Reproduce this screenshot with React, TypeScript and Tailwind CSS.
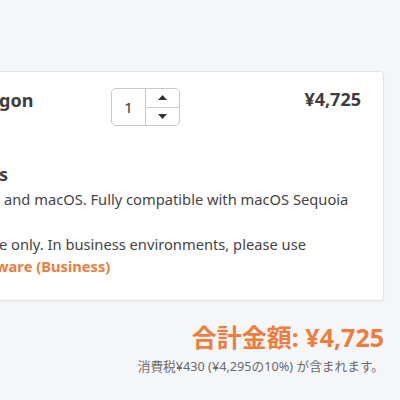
import { ReactNode } from "react";

const lines = {
  title: { hidden: "Microsoft NTFS for Mac by Para", shown: "gon" },
  heading: { hidden: "System Requirement", shown: "s" },
};

// one row of text whose first part sits to the left of the viewport
function Line({
  hidden,
  children,
  offset = 0,
  className = "",
}: {
  hidden: string;
  children?: ReactNode;
  offset?: number;
  className?: string;
}) {
  return (
    <div className={`flex whitespace-nowrap ${className}`}>
      <span className="flex w-[300px] shrink-0 justify-end overflow-hidden pr-[2px]">
        {hidden}
      </span>
      <span style={{ marginLeft: offset - 2 }}>{children}</span>
    </div>
  );
}

function Spinner({ value }: { value: number }) {
  return (
    <div className="flex h-[38px] w-[69px] shrink-0 overflow-hidden rounded-[5px] border border-[#c9c9c9] bg-white">
      <div className="flex w-[33px] items-center justify-center text-[15px] text-[#333]">
        {value}
      </div>
      <div className="flex flex-1 flex-col border-l border-[#c9c9c9]">
        <div className="flex flex-1 items-center justify-center border-b border-[#c9c9c9]">
          <svg width="9" height="5" viewBox="0 0 9 5">
            <path d="M4.5 0 9 5H0z" fill="#333" />
          </svg>
        </div>
        <div className="flex flex-1 items-center justify-center">
          <svg width="9" height="5" viewBox="0 0 9 5">
            <path d="M0 0h9L4.5 5z" fill="#333" />
          </svg>
        </div>
      </div>
    </div>
  );
}

export default function App() {
  return (
    <div className="h-[400px] w-[400px] overflow-hidden bg-[#f5f6f8] font-['Noto_Sans','Noto_Sans_CJK_JP',sans-serif] text-[#444]">
      <div className="ml-[-322px] w-[706px] pt-[71px]">
        <div className="rounded-[4px] border border-[#e2e4e7] bg-white px-[22px] pb-[22px] pt-[16px] shadow-[0_1px_2px_rgba(0,0,0,0.04)]">
          <div className="flex items-start">
            <div className="w-[410px] shrink-0 pt-[3px] text-[18px] font-bold leading-none text-[#3d3d3d]">
              <Line hidden={lines.title.hidden}>{lines.title.shown}</Line>
            </div>
            <Spinner value={1} />
            <div className="flex-1 pt-[2px] text-right text-[18px] font-bold leading-none text-[#3d3d3d]">
              ¥4,725
            </div>
          </div>

          <div className="mt-[35px] text-[18px] font-bold leading-[27px] text-[#3d3d3d]">
            <Line hidden={lines.heading.hidden}>{lines.heading.shown}</Line>
          </div>

          <div className="text-[14.7px] leading-[22.4px]">
            <Line hidden="Paragon driver for Windows" offset={5}>
              and macOS. Fully compatible with macOS Sequoia
            </Line>
            <Line hidden="15. ">{" "}</Line>
            <Line hidden="This license is for personal us">
              e only. In business environments, please use
            </Line>
            <Line
              hidden="Microsoft NTFS for Mac by Paragon Soft"
              offset={-3}
              className="font-bold text-[#ee7d3e]"
            >
              ware (Business)
            </Line>
          </div>
        </div>

        <div className="mt-[20px] text-right">
          <div className="text-[25px] font-bold leading-[32px] text-[#ee7d3e]">
            合計金額: ¥4,725
          </div>
          <div className="mt-[4px] text-[12.7px] leading-[18px] text-[#6b6b6b]">
            消費税¥430 (¥4,295の10%) が含まれます。
          </div>
        </div>
      </div>
    </div>
  );
}
